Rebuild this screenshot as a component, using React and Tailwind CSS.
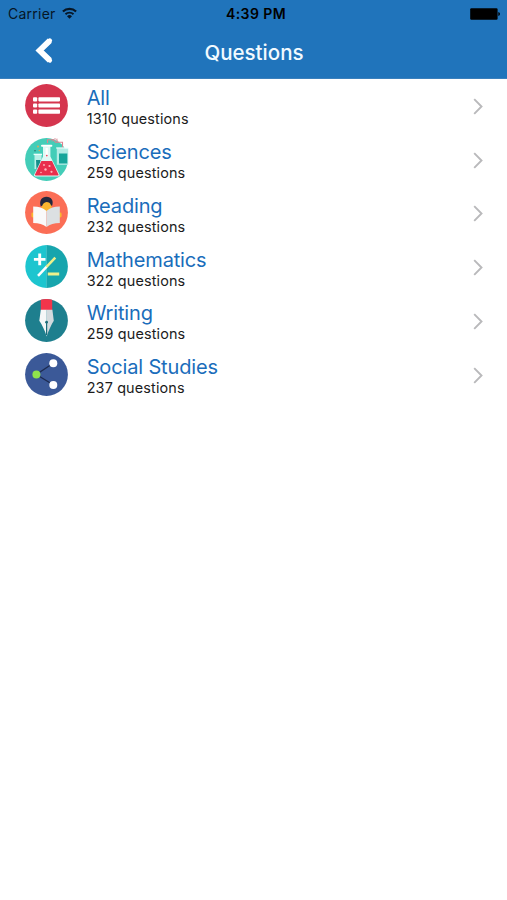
const AllIcon = () => (
  <svg viewBox="0 0 43 43" className="w-[43px] h-[43px]">
    <circle cx="21.5" cy="21.5" r="21.4" fill="#d5354e" />
    <g fill="#fff">
      <rect x="8" y="13.2" width="4.2" height="4.2" rx="1" />
      <rect x="8" y="19.4" width="4.2" height="4.2" rx="1" />
      <rect x="8" y="25.6" width="4.2" height="4.2" rx="1" />
      <rect x="13.4" y="13.2" width="21.6" height="4.2" rx="0.8" />
      <rect x="13.4" y="19.4" width="21.6" height="4.2" rx="0.8" />
      <rect x="13.4" y="25.6" width="21.6" height="4.2" rx="0.8" />
    </g>
  </svg>
);

const SciencesIcon = () => (
  <svg viewBox="0 0 43 43" className="w-[43px] h-[43px] overflow-visible">
    <circle cx="21.5" cy="21.5" r="21.4" fill="#43cdb8" />
    <path d="M9.5 17h7v14h-7z" fill="#b9f0e8" />
    <path d="M11 22h4.5v11.5l-4 -2z" fill="#158f8b" />
    <path d="M8.6 16.4h8.4" stroke="#eafffb" strokeWidth="1.4" />
    <path d="M22.5 5V1.8h6l2 2.5h7V10" fill="none" stroke="#d98590" strokeWidth="1.1" />
    <path d="M27 3.6l3-3.2 3 3.2M32 .6v4" fill="none" stroke="#d98590" strokeWidth="0.8" />
    <path d="M31.8 10.2h11.4v16.6H31.8z" fill="#b2ece5" />
    <path d="M34 15.5h8.3v10H34z" fill="#16a69b" />
    <path d="M31.2 10h12.2" stroke="#f1fffd" strokeWidth="1.2" />
    <path d="M18 8.2h7.4v10.3l9.2 18.3q.6 1.6-1.2 1.6H10.3q-1.8 0-1.2-1.6L18 18.5z" fill="#dff8f5" />
    <path d="M16.4 23h10.6l6.5 13.4q.3 1-.8 1H10.8q-1.1 0-.8-1z" fill="#e92f4d" />
    <path d="M17 7.8h9.4" stroke="#fff" strokeWidth="2" strokeLinecap="round" />
    <path d="M21.7 10v9" stroke="#fff" strokeWidth="2.2" />
    <g fill="#ffb6bd">
      <circle cx="19" cy="27" r="0.9" />
      <circle cx="24.5" cy="28" r="1.1" />
      <circle cx="20.5" cy="31.5" r="1.2" />
      <circle cx="16" cy="34.5" r="0.8" />
      <circle cx="26.5" cy="33.8" r="1.1" />
    </g>
    <circle cx="21.8" cy="17.6" r="0.9" fill="#e94b61" />
    <circle cx="13" cy="8.5" r="0.9" fill="#e9a84c" />
    <circle cx="10" cy="12.8" r="0.8" fill="#28706c" />
    <circle cx="14.3" cy="12.5" r="0.7" fill="#e9a84c" />
  </svg>
);

const ReadingIcon = () => (
  <svg viewBox="0 0 43 43" className="w-[43px] h-[43px]">
    <circle cx="21.5" cy="21.5" r="21.4" fill="#fb6e56" />
    <circle cx="21.6" cy="13.8" r="5" fill="#fbb62f" />
    <path d="M15.8 15.5c-2-6 1.2-9.7 5.6-9.7 5 0 7.7 4 5.6 9.3l-1.2-1c-.4-2-2-3-4.2-3.1-2.4.5-3.7 1.6-4.2 3.4z" fill="#23283d" />
    <path d="M16.5 15.5q5 2.5 10 0v5h-10z" fill="#fbb62f" />
    <rect x="6.4" y="21.5" width="3" height="5" rx="1.4" fill="#fbb62f" />
    <rect x="33.6" y="21.5" width="3" height="5" rx="1.4" fill="#fbb62f" />
    <path d="M8.2 15.4c5.5 0 10 1.3 13.3 4.7v16c-3.3-3-7.8-4.2-13.3-4.2z" fill="#fafafa" />
    <path d="M34.8 15.4c-5.5 0-10 1.3-13.3 4.7v16c3.3-3 7.8-4.2 13.3-4.2z" fill="#dce0e2" />
  </svg>
);

const MathematicsIcon = () => (
  <svg viewBox="0 0 43 43" className="w-[43px] h-[43px]">
    <path d="M21.7.1a21.4 21.4 0 0 0 0 42.8z" fill="#1dc5cf" />
    <path d="M21.5.1a21.4 21.4 0 0 1 0 42.8z" fill="#17a5ad" />
    <path d="M14.7 8.6v11.6M8.9 14.4h11.6" stroke="#fff" strokeWidth="2.9" />
    <path d="M13 30.8l8.7-9.1" stroke="#fff" strokeWidth="2.5" />
    <path d="M21.5 21.9l8.8-9.3" stroke="#eef08b" strokeWidth="2.5" />
    <path d="M22.8 29h11.4" stroke="#eef08b" strokeWidth="3" />
  </svg>
);

const WritingIcon = () => (
  <svg viewBox="0 0 43 43" className="w-[43px] h-[43px]">
    <circle cx="21.5" cy="21.5" r="21.4" fill="#1e7f8e" />
    <path d="M15.8.8Q21.5-.7 27.2.8V11H15.8z" fill="#f3354b" />
    <path d="M15.8 10.8h5.9v26.6c-1.8-6-4.6-11.4-7.4-15.6z" fill="#f5f7f8" />
    <path d="M27.4 10.8h-5.7v26.6c1.8-6 4.6-11.4 7.1-15.6z" fill="#d3dade" />
    <path d="M21.6 23v13" stroke="#1e6d7a" strokeWidth="1.2" />
    <circle cx="21.6" cy="23.2" r="1.4" fill="#1e6d7a" />
  </svg>
);

const SocialIcon = () => (
  <svg viewBox="0 0 43 43" className="w-[43px] h-[43px]">
    <circle cx="21.5" cy="21.5" r="21.4" fill="#3b5998" />
    <path d="M28.2 10.2L11.3 21.5l16.9 10.3" fill="none" stroke="#1d2b4f" strokeWidth="1.3" />
    <circle cx="28.3" cy="10.3" r="4" fill="#fff" />
    <circle cx="28.3" cy="32" r="4" fill="#fff" />
    <circle cx="11.4" cy="21.5" r="4" fill="#90e34c" />
  </svg>
);

const categories = [
  { name: 'All', count: 1310, icon: AllIcon },
  { name: 'Sciences', count: 259, icon: SciencesIcon },
  { name: 'Reading', count: 232, icon: ReadingIcon },
  { name: 'Mathematics', count: 322, icon: MathematicsIcon },
  { name: 'Writing', count: 259, icon: WritingIcon },
  { name: 'Social Studies', count: 237, icon: SocialIcon },
];

const StatusBar = () => (
  <div className="grid grid-cols-3 items-center h-7 pl-2 pr-[7px] text-[14px] leading-7 text-black">
    <div className="flex items-center gap-[6px]">
      <span className="text-[#061626] tracking-[0.25px]">Carrier</span>
      <svg viewBox="0 0 15 12" className="w-[15px] h-3 -mt-0.5">
        <path d="M.9 4.6a9.4 9.4 0 0 1 13.2 0" fill="none" stroke="#061626" strokeWidth="2.1" />
        <path d="M3.5 7.3a5.7 5.7 0 0 1 8 0" fill="none" stroke="#061626" strokeWidth="1.9" />
        <path d="M7.5 11.8L5 9.3a3.6 3.6 0 0 1 5 0z" fill="#061626" />
      </svg>
    </div>
    <div className="text-center font-semibold tracking-[0.4px] pl-1">4:39 PM</div>
    <svg viewBox="0 0 30 12" className="w-[30px] h-3 justify-self-end -mt-px">
      <rect x="0.2" y="0.3" width="27.4" height="11.4" rx="1.2" fill="#000" />
      <path d="M28.3 4q1.7.3 1.7 2t-1.7 2z" fill="#000" />
    </svg>
  </div>
);

export default function App() {
  return (
    <div className="w-full h-[900px] bg-white overflow-hidden font-['Inter','Liberation_Sans',sans-serif]">
      <header className="h-[79px] bg-[#2074bb] border-b border-[#3a80bd]">
        <StatusBar />
        <div className="grid grid-cols-[80px_1fr_80px] items-center h-[49px]">
          <button className="justify-self-start ml-[35px]">
            <svg viewBox="0 0 19 27" className="w-[19px] h-[27px] -mt-[5px]">
              <path d="M14.8 3.6L4.6 13.5l10.2 9.9" fill="none" stroke="#fff" strokeWidth="5.8" />
              <path d="M14.8 3.6L4.6 13.5l10.2 9.9" fill="none" stroke="#fff" strokeWidth="4.6" strokeLinecap="round" />
            </svg>
          </button>
          <h1 className="text-center text-[20.5px] leading-6 font-medium text-[#f2faff] pl-px">Questions</h1>
        </div>
      </header>

      <ul>
        {categories.map((category) => {
          const Icon = category.icon;
          return (
            <li key={category.name} className="flex items-center h-[53.8px] pl-[25.2px] pr-[24px]">
              <div className="mb-[1px]">
                <Icon />
              </div>
              <div className="flex-1 ml-[18.5px] pt-[1.8px]">
                <div className="text-[20px] leading-6 tracking-[-0.15px] text-[#1a6dbb]">{category.name}</div>
                <div className="text-[14.4px] leading-[17px] tracking-[0.15px] text-[#1c1c1c]">{category.count} questions</div>
              </div>
              <svg viewBox="0 0 10 17" className="w-[10px] h-[17px] mt-px">
                <path d="M1.2 1.2l7.3 7.3-7.3 7.3" fill="none" stroke="#b9b9bb" strokeWidth="1.9" />
              </svg>
            </li>
          );
        })}
      </ul>
    </div>
  );
}
